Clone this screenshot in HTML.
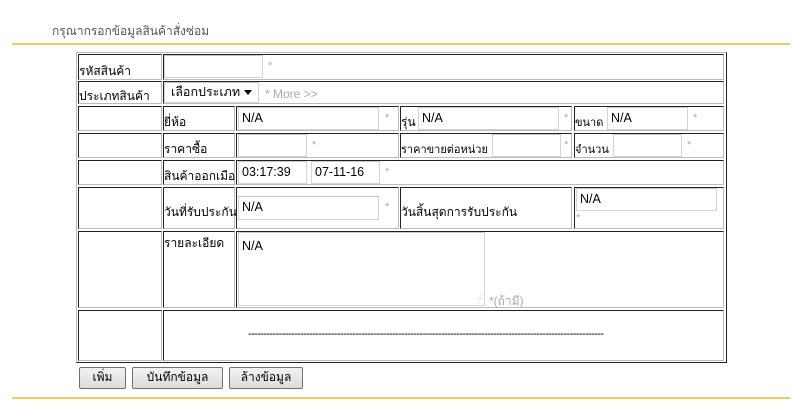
<!DOCTYPE html><html><head><meta charset="utf-8"><style>
body{margin:0;width:807px;height:417px;background:#fff;font-family:Tahoma,"Liberation Sans","DejaVu Sans",sans-serif;font-size:12px;color:#000;position:relative;overflow:hidden}
.a{position:absolute}
.c{position:absolute;box-sizing:border-box;border:1px solid;border-color:#222 #bbb #bbb #222;line-height:1}
.i{position:absolute;box-sizing:border-box;border:1px solid #d4d4d4;border-top-color:#c8c8c8;background:#fff;font-size:12.5px;padding:3px 3px;line-height:14px}
.s{position:absolute;color:#aaa;font-size:11px}
.t{position:absolute;white-space:nowrap}
.b{position:absolute;box-sizing:border-box;border:1px solid #707070;border-radius:2px;background:linear-gradient(#f2f2f2,#dcdcdc);font-size:12px;text-align:center;line-height:19px;height:22px;top:367px}
</style></head><body>
<div class="t" style="left:52px;top:22px;color:#555;font-size:12px">กรุณากรอกข้อมูลสินค้าสั่งซ่อม</div>
<div class="a" style="left:12px;top:43px;width:778px;height:2px;background:#f6c860"></div>
<div class="a" style="left:12px;top:397px;width:778px;height:2px;background:#f6c860"></div>
<div class="a" style="left:76px;top:52px;width:651px;height:311px;box-sizing:border-box;border:1px solid;border-color:#bbb #222 #222 #bbb"></div>
<!-- r1 -->
<div class="c" style="left:78px;top:54px;width:84px;height:26px"></div><div class="t" style="left:79px;top:62px">รหัสสินค้า</div>
<div class="c" style="left:163px;top:54px;width:561px;height:26px"></div>
<div class="i" style="left:164px;top:55px;width:99px;height:23px"></div><div class="s" style="left:268px;top:60px">*</div>
<!-- r2 -->
<div class="c" style="left:78px;top:81px;width:84px;height:23px"></div><div class="t" style="left:79px;top:87px">ประเภทสินค้า</div>
<div class="c" style="left:163px;top:81px;width:561px;height:23px"></div>
<div class="i" style="left:164px;top:82px;width:95px;height:21px;padding:2px 6px;font-size:12.5px">เลือกประเภท<span style="position:absolute;right:6px;top:7px;border-left:4px solid transparent;border-right:4px solid transparent;border-top:5px solid #000"></span></div>
<div class="s" style="left:265px;top:87px;font-size:12px">* More &gt;&gt;</div>
<!-- r3 -->
<div class="c" style="left:78px;top:106px;width:84px;height:25px"></div>
<div class="c" style="left:163px;top:106px;width:72px;height:25px"></div><div class="t" style="left:164px;top:113px">ยี่ห้อ</div>
<div class="c" style="left:236px;top:106px;width:163px;height:25px"></div>
<div class="i" style="left:238px;top:107px;width:141px;height:23px">N/A</div><div class="s" style="left:385px;top:112px">*</div>
<div class="c" style="left:400px;top:106px;width:172px;height:25px"></div><div class="t" style="left:401px;top:113px">รุ่น</div>
<div class="i" style="left:418px;top:107px;width:141px;height:23px">N/A</div><div class="s" style="left:564px;top:112px">*</div>
<div class="c" style="left:574px;top:106px;width:150px;height:25px"></div><div class="t" style="left:575px;top:113px;font-size:11px">ขนาด</div>
<div class="i" style="left:607px;top:107px;width:81px;height:23px">N/A</div><div class="s" style="left:693px;top:112px">*</div>
<!-- r4 -->
<div class="c" style="left:78px;top:133px;width:84px;height:25px"></div>
<div class="c" style="left:163px;top:133px;width:72px;height:25px"></div><div class="t" style="left:164px;top:140px">ราคาซื้อ</div>
<div class="c" style="left:236px;top:133px;width:163px;height:25px"></div>
<div class="i" style="left:238px;top:134px;width:69px;height:23px"></div><div class="s" style="left:312px;top:139px">*</div>
<div class="c" style="left:400px;top:133px;width:172px;height:25px"></div><div class="t" style="left:401px;top:140px;font-size:11px">ราคาขายต่อหน่วย</div>
<div class="i" style="left:492px;top:134px;width:69px;height:23px"></div><div class="s" style="left:564px;top:139px">*</div>
<div class="c" style="left:574px;top:133px;width:150px;height:25px"></div><div class="t" style="left:575px;top:140px;font-size:11px">จำนวน</div>
<div class="i" style="left:613px;top:134px;width:69px;height:23px"></div><div class="s" style="left:687px;top:139px">*</div>
<!-- r5 -->
<div class="c" style="left:78px;top:160px;width:84px;height:25px"></div>
<div class="c" style="left:163px;top:160px;width:72px;height:25px"></div><div class="t" style="left:164px;top:167px">สินค้าออกเมือ</div>
<div class="c" style="left:236px;top:160px;width:488px;height:25px"></div>
<div class="i" style="left:238px;top:161px;width:69px;height:23px;font-size:12.5px">03:17:39</div>
<div class="i" style="left:311px;top:161px;width:69px;height:23px">07-11-16</div><div class="s" style="left:385px;top:166px">*</div>
<!-- r6 -->
<div class="c" style="left:78px;top:187px;width:84px;height:42px"></div>
<div class="c" style="left:163px;top:187px;width:72px;height:42px"></div><div class="t" style="left:164px;top:203px">วันที่รับประกัน</div>
<div class="c" style="left:236px;top:187px;width:163px;height:42px"></div>
<div class="i" style="left:238px;top:196px;width:141px;height:24px">N/A</div><div class="s" style="left:385px;top:201px">*</div>
<div class="c" style="left:400px;top:187px;width:172px;height:42px"></div><div class="t" style="left:401px;top:203px">วันสิ้นสุดการรับประกัน</div>
<div class="c" style="left:574px;top:187px;width:150px;height:42px"></div>
<div class="i" style="left:576px;top:188px;width:141px;height:23px">N/A</div><div class="s" style="left:576px;top:212px">*</div>
<!-- r7 -->
<div class="c" style="left:78px;top:231px;width:84px;height:77px"></div>
<div class="c" style="left:163px;top:231px;width:72px;height:77px"></div><div class="t" style="left:164px;top:234px">รายละเอียด</div>
<div class="c" style="left:236px;top:231px;width:488px;height:77px"></div>
<div class="i" style="left:238px;top:232px;width:247px;height:74px;padding:6px 3px">N/A<span style="position:absolute;right:2px;bottom:1px;color:#aaa;font-size:8px">.:</span></div>
<div class="s" style="left:489px;top:292px;font-size:12px">*(ถ้ามี)</div>
<!-- r8 -->
<div class="c" style="left:78px;top:310px;width:84px;height:51px"></div>
<div class="c" style="left:163px;top:310px;width:561px;height:51px"></div>
<div class="t" style="left:248px;top:328px;font-size:11px;letter-spacing:-0.6px;width:392px;overflow:hidden">--------------------------------------------------------------------------------------------------------------------</div>
<!-- buttons -->
<div class="b" style="left:79px;width:47px">เพิ่ม</div>
<div class="b" style="left:132px;width:91px">บันทึกข้อมูล</div>
<div class="b" style="left:229px;width:74px">ล้างข้อมูล</div>
</body></html>
